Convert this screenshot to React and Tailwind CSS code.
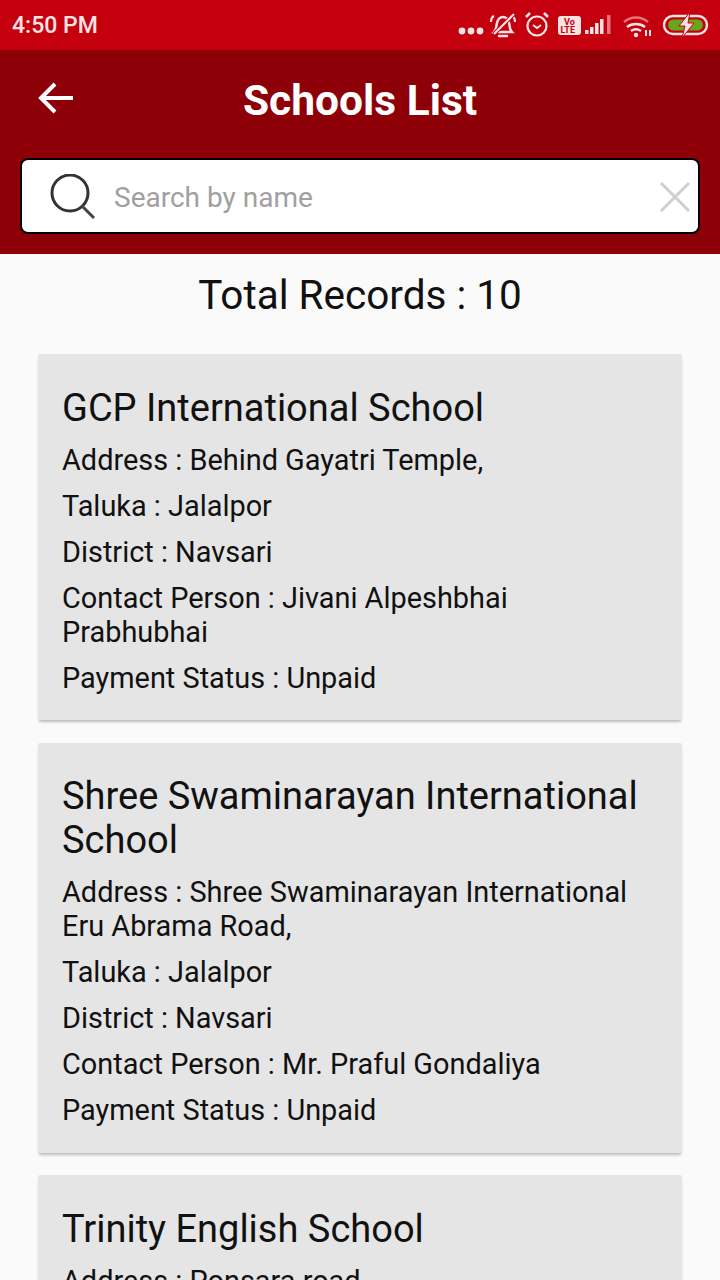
import React from 'react';

const schools = [
  {
    name: 'GCP International School',
    address: 'Address : Behind Gayatri Temple,',
    taluka: 'Taluka : Jalalpor',
    district: 'District : Navsari',
    contact: 'Contact Person : Jivani Alpeshbhai Prabhubhai',
    payment: 'Payment Status : Unpaid',
  },
  {
    name: 'Shree Swaminarayan International School',
    address: 'Address : Shree Swaminarayan International Eru Abrama Road,',
    taluka: 'Taluka : Jalalpor',
    district: 'District : Navsari',
    contact: 'Contact Person : Mr. Praful Gondaliya',
    payment: 'Payment Status : Unpaid',
  },
  {
    name: 'Trinity English School',
    address: 'Address : Ponsara road',
    taluka: 'Taluka : Jalalpor',
    district: 'District : Navsari',
    contact: 'Contact Person : Unknown',
    payment: 'Payment Status : Unpaid',
  },
];

const StatusIcons = () => (
  <svg width="260" height="34" viewBox="0 0 260 34" fill="none" className="shrink-0">
    {/* dots */}
    <circle cx="4" cy="23" r="3.4" fill="#fbe3e3" />
    <circle cx="13" cy="23" r="3.4" fill="#fbe3e3" />
    <circle cx="22" cy="23" r="3.4" fill="#fbe3e3" />
    {/* muted bell */}
    <path d="M36 24c3-3 2-6 3-9 1-4 3-6 6-6s5 2 6 6c1 3 0 6 3 9z" stroke="#fbe3e3" strokeWidth="2.4" />
    <path d="M41 28h8" stroke="#fbe3e3" strokeWidth="2.4" strokeLinecap="round" />
    <path d="M33 14c0-3 1-5 3-6M57 14c0-3-1-5-3-6" stroke="#fbe3e3" strokeWidth="2.2" />
    <path d="M36 26 56 6" stroke="#c4000f" strokeWidth="4" />
    <path d="M36 26 56 6" stroke="#fbe3e3" strokeWidth="2" />
    {/* alarm */}
    <circle cx="79" cy="18" r="9.5" stroke="#fbe3e3" strokeWidth="2.2" />
    <path d="M75 17l4 3 4-3" stroke="#fbe3e3" strokeWidth="2" />
    <path d="M68 9l4-4M90 9l-4-4" stroke="#fbe3e3" strokeWidth="2.6" />
    {/* volte */}
    <rect x="100" y="8" width="23" height="19" rx="3" fill="#fbe3e3" />
    <text x="106" y="16.500" fontSize="9" fontWeight="700" fontFamily="Roboto, sans-serif" fill="#c4000f">Vo</text>
    <text x="102.500" y="25" fontSize="9" fontWeight="700" fontFamily="Roboto, sans-serif" fill="#c4000f">LTE</text>
    {/* signal */}
    <rect x="127" y="22" width="3.500" height="4" fill="#fbe3e3" />
    <rect x="132" y="19" width="3.500" height="7" fill="#fbe3e3" />
    <rect x="137" y="15" width="3.500" height="11" fill="#fbe3e3" />
    <rect x="142" y="11" width="3.500" height="15" fill="#fbe3e3" />
    <rect x="149" y="7" width="3.500" height="19" fill="#e8757c" />
    {/* wifi */}
    <path d="M166 14c7-6 17-6 24 0" stroke="#e8757c" strokeWidth="2.4" />
    <path d="M169 19c5-4 13-4 18 0" stroke="#fbe3e3" strokeWidth="2.4" />
    <path d="M173 23c3-2 7-2 10 0" stroke="#fbe3e3" strokeWidth="2.4" />
    <circle cx="178" cy="27" r="2.2" fill="#fbe3e3" />
    <path d="M188 22v6M192 22v6" stroke="#fbe3e3" strokeWidth="2" />
    {/* battery */}
    <rect x="206" y="8" width="43" height="18" rx="9" stroke="#fbe3e3" strokeWidth="2.4" />
    <rect x="210" y="11.500" width="35" height="11" rx="5.500" fill="#6aa41e" />
    <path d="M232 4l-11 14h6l-3 12 12-15h-6z" fill="#fbe3e3" stroke="#c4000f" strokeWidth="1" />
  </svg>
);

const SchoolCard = ({ school }) => (
  <div className="bg-[#e5e5e5] rounded-[2px] shadow-[0_3px_3px_-1px_rgba(0,0,0,0.25)] pt-[31.500px] pb-[25.500px] pl-6 pr-[30px] text-[#111]">
    <h2 className="text-[38px] leading-[44px] font-normal mb-[13px]">{school.name}</h2>
    <div className="flex flex-col gap-3 text-[28.900px] leading-[34px]">
      <p>{school.address}</p>
      <p>{school.taluka}</p>
      <p>{school.district}</p>
      <p>{school.contact}</p>
      <p>{school.payment}</p>
    </div>
  </div>
);

export default function App() {
  return (
    <div className="h-[1280px] overflow-hidden bg-[#fafafa] font-['Roboto',sans-serif]">
      <div className="h-[50px] bg-[#c4000f] flex items-center justify-between pl-3 pr-[2px]">
        <span className="text-[23px] font-medium text-[#fbe3e3] pt-[2px]">4:50 PM</span>
        <StatusIcons />
      </div>

      <header className="h-[204px] bg-[#8e0007] flex flex-col">
        <div className="h-[108px] flex items-center relative justify-center pb-2">
          <svg width="38" height="38" viewBox="0 0 38 38" fill="none" className="absolute left-[37px] top-[29px]">
            <path d="M36 19H4M18 5 4 19l14 14" stroke="#fff" strokeWidth="4" />
          </svg>
          <h1 className="text-[42.500px] font-bold text-white pt-[2px]">Schools List</h1>
        </div>
        <div className="mx-5 h-[76px] bg-white rounded-lg border-2 border-black flex items-center pl-[28px] pr-[4px]">
          <svg width="46" height="46" viewBox="0 0 46 46" fill="none" className="shrink-0 mt-[2px]">
            <circle cx="20" cy="19" r="18" stroke="#333" strokeWidth="3" />
            <path d="M32 32l12 12" stroke="#444" strokeWidth="3" />
          </svg>
          <span className="ml-[18px] text-[28px] text-[#a0a0a0] flex-1 pt-[3px]">Search by name</span>
          <svg width="32" height="32" viewBox="0 0 32 32" fill="none" className="shrink-0 mr-[3px] mt-[2px]">
            <path d="M2 2l28 28M30 2 2 30" stroke="#cfcfcf" strokeWidth="3" />
          </svg>
        </div>
      </header>

      <p className="text-center text-[40.500px] leading-[47px] text-[#111] mt-[18px] mb-[35px]">Total Records : 10</p>

      <div className="mx-[38px] flex flex-col gap-[22.500px]">
        {schools.map((s) => (
          <SchoolCard key={s.name} school={s} />
        ))}
      </div>
    </div>
  );
}
